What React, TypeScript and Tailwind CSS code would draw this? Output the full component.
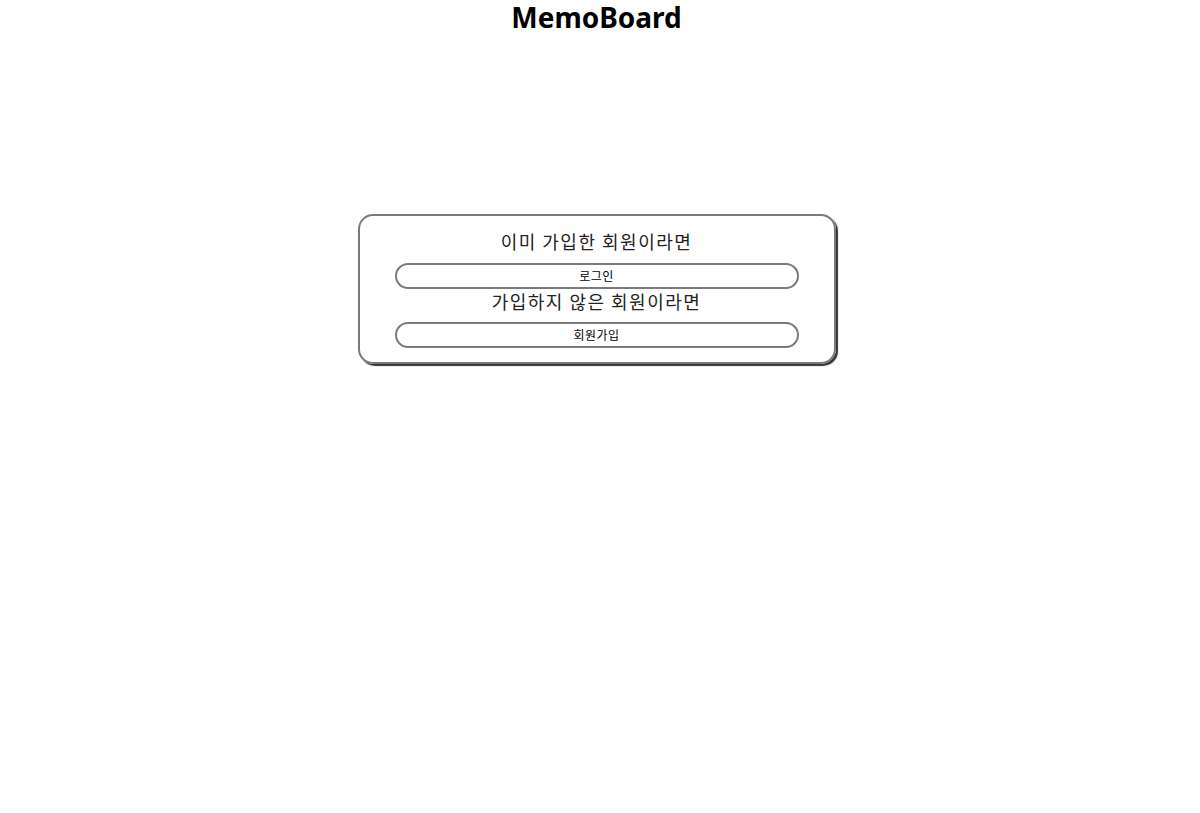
export default function App() {
  return (
    <div className="min-h-screen bg-white pr-[7px] font-['Noto_Sans','Noto_Sans_CJK_KR',sans-serif] text-black">
      <h1 className="text-center text-[28px] font-bold leading-[34px] pt-0">MemoBoard</h1>
      <div className="flex justify-center mt-[180px]">
        <div className="w-[478px] rounded-[15px] border-2 border-[#7a7a7a] px-[35px] pt-[13px] pb-[14px] shadow-[2px_2px_1px_#333] flex flex-col">
          <p className="text-center text-[18px] leading-[24px] tracking-[1.5px] text-[#222] font-['Noto_Sans_CJK_KR',sans-serif]">
            이미 가입한 회원이라면
          </p>
          <button className="mt-[10px] h-[26px] w-full rounded-full border-2 border-[#7a7a7a] bg-white text-[12px] leading-none tracking-[0.5px] text-black font-['Noto_Sans_CJK_KR',sans-serif]">
            로그인
          </button>
          <p className="text-center text-[18px] leading-[24px] tracking-[1.5px] text-[#222] font-['Noto_Sans_CJK_KR',sans-serif]">
            가입하지 않은 회원이라면
          </p>
          <button className="mt-[9px] h-[26px] w-full rounded-full border-2 border-[#7a7a7a] bg-white text-[12px] leading-none tracking-[0.5px] text-black font-['Noto_Sans_CJK_KR',sans-serif]">
            회원가입
          </button>
        </div>
      </div>
    </div>
  );
}
